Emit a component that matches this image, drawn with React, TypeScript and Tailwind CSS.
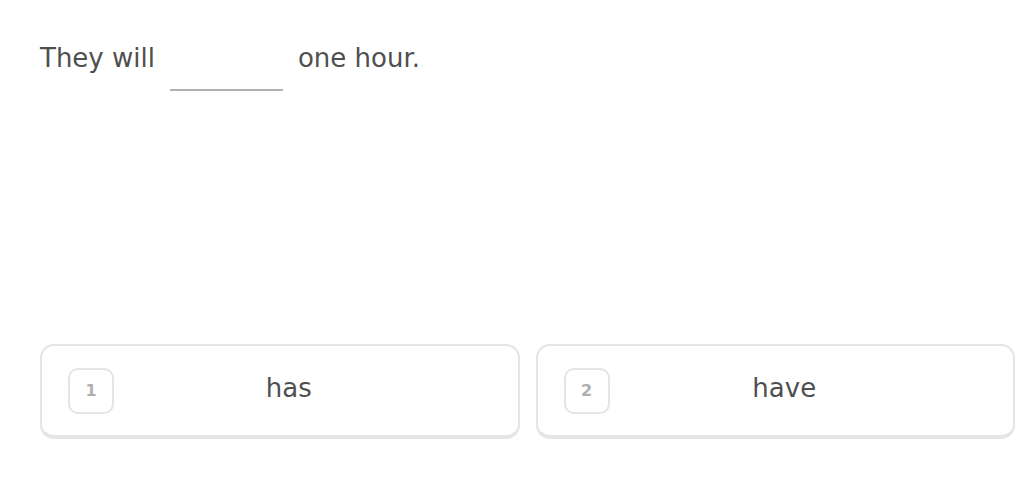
const choices = [
  { key: '1', label: 'has' },
  { key: '2', label: 'have' },
]

function ChoiceCard({ num, label }: { num: string; label: string }) {
  return (
    <button
      type="button"
      className="flex h-[95px] flex-1 items-center rounded-[14px] border-2 border-b-4 border-[#e5e5e5] bg-white pl-[26px] pr-[54px]"
    >
      <span className="flex h-[46px] w-[46px] shrink-0 items-center justify-center rounded-[10px] border-2 border-[#e5e5e5] text-[16px] font-bold text-[#afafaf]">
        {num}
      </span>
      <span className="flex-1 pb-[5px] text-center text-[26px] leading-none text-[#4f4f4f]">{label}</span>
    </button>
  )
}

export default function App() {
  return (
    <div
      className="h-[503px] w-[1024px] overflow-hidden bg-white pl-[40px] pr-[9px]"
      style={{ fontFamily: '"DejaVu Sans", "Open Sans", sans-serif' }}
    >
      <div className="flex items-start pt-[38px] text-[26px] leading-[40px] text-[#4f4f4f]">
        <span>They will</span>
        <span className="mx-[15px] h-[53px] w-[113px] border-b-2 border-[#b0b0b0]" />
        <span>one hour.</span>
      </div>

      <div className="mt-[253px] flex gap-[16px]">
        {choices.map((c) => (
          <ChoiceCard key={c.key} num={c.key} label={c.label} />
        ))}
      </div>
    </div>
  )
}
